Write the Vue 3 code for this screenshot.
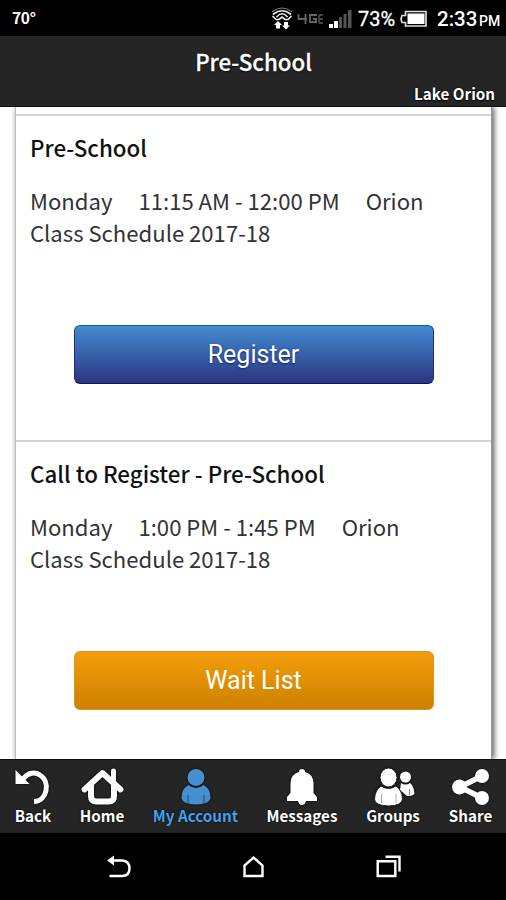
<script setup>
const classes = [
  { title: 'Pre-School', day: 'Monday', time: '11:15 AM - 12:00 PM', place: 'Orion', term: 'Class Schedule 2017-18', action: 'Register', kind: 'register' },
  { title: 'Call to Register - Pre-School', day: 'Monday', time: '1:00 PM - 1:45 PM', place: 'Orion', term: 'Class Schedule 2017-18', action: 'Wait List', kind: 'wait' },
]
const tabs = [
  { label: 'Back', icon: 'back' },
  { label: 'Home', icon: 'home' },
  { label: 'My Account', icon: 'user', active: true },
  { label: 'Messages', icon: 'bell' },
  { label: 'Groups', icon: 'groups' },
  { label: 'Share', icon: 'share' },
]
</script>

<template>
  <div class="screen">
    <div class="status">
      <span class="temp">70°</span>
      <div class="indicators">
        <svg class="wifi" width="22" height="24" viewBox="0 0 22 24">
          <g fill="none" stroke="#e8e8e8" stroke-width="1.7" stroke-linecap="round">
            <path d="M1.5 4.5Q11-2.5 20.5 4.5" stroke="#888" stroke-width="1.2" />
            <path d="M2.500 7Q11 .5 19.500 7M6 9.500Q11 4 16 9.500" />
            <path d="M2 9.500L5 12.500H8L11 10L14 12.500H17L20 9.500" />
          </g>
          <path d="M7 14L3 18H5V21.500H9V18H11ZM15 22.500L11 18.500H13V15H17V18.500H19Z" fill="#fff" />
        </svg>
        <svg class="lte" width="29" height="14" viewBox="0 0 29 14">
          <g fill="none" stroke="#666" stroke-width="1.8">
            <path d="M1.500 2V7H10M8.500 2V12M20 3H13V10H19V7H16" />
            <path d="M22 3V11M22 3H26M22 7H26M22 11H26" stroke="#444" />
          </g>
        </svg>
        <svg class="signal" width="25" height="20" viewBox="0 0 25 20">
          <path d="M1 15H5V19H1ZM6 12H10V19H6Z" fill="#fff" />
          <path d="M11 8H14V19H11ZM15.500 5H18.500V19H15.500ZM20 1H23.500V19H20Z" fill="#555" />
        </svg>
        <span class="percent">73%</span>
        <svg class="battery" width="28" height="18" viewBox="0 0 28 18">
          <path d="M5.500 1.500H26V16H5.500V12.500H2L1 9L2 5.500H5.500Z" fill="none" stroke="#ddd" stroke-width="1.700" />
          <path d="M7.500 3.500H24.500V14H7.500Z" fill="#fff" />
        </svg>
        <span class="clock">2:33</span><span class="meridiem">PM</span>
      </div>
    </div>

    <header class="header">
      <h1>Pre-School</h1>
      <span class="location">Lake Orion</span>
    </header>

    <main class="content">
      <div class="sheet">
        <section v-for="item in classes" :key="item.title" class="class-item">
          <h2>{{ item.title }}</h2>
          <div class="details">
            <div class="when"><span>{{ item.day }}</span><span>{{ item.time }}</span><span>{{ item.place }}</span></div>
            <div>{{ item.term }}</div>
          </div>
          <button :class="['action', item.kind]">{{ item.action }}</button>
        </section>
      </div>
    </main>

    <nav class="tabs">
      <div v-for="tab in tabs" :key="tab.label" class="tab" :class="{ active: tab.active }">
        <svg class="icon" width="44" height="40" viewBox="0 0 44 40">
          <g v-if="tab.icon === 'back'">
            <path d="M12 11C17 4.500 24 3.500 29 7C40 14 36 33 23 33.500" fill="none" stroke="#fff" stroke-width="5" />
            <path d="M4.500 2V16H18.500Z" fill="#fff" />
          </g>
          <g v-else-if="tab.icon === 'home'" fill="none" stroke="#fff" stroke-linecap="round" stroke-linejoin="round">
            <path d="M11 17V28Q11 33.500 16.500 33.500H28.500Q34 33.500 34 28V17" stroke-width="6" stroke-linecap="butt" />
            <path d="M4.500 21.500L22.500 5L40.500 21.500" stroke-width="5.800" />
            <path d="M33.500 3V14" stroke-width="5" />
          </g>
          <g v-else-if="tab.icon === 'user'" fill="#438fcf">
            <circle cx="22" cy="9.500" r="8.500" />
            <path d="M14.500 17Q22 23 29.500 17Q36 20 36.500 29Q37 36 22 36.500Q7 36 7.500 29Q8 20 14.500 17Z" />
            <path d="M14 27V35M30 27V35" stroke="#28547b" stroke-width="1.200" />
          </g>
          <g v-else-if="tab.icon === 'bell'" fill="#fff">
            <path d="M19 4Q19 1 22 1T25 4Q33 6 33.500 15V25L37 29V33H26Q25 37 22 37T18 33H7V29L10.500 25V15Q11 6 19 4Z" />
          </g>
          <g v-else-if="tab.icon === 'groups'" fill="#fff">
            <circle cx="34.500" cy="9" r="5.500" />
            <path d="M30 15Q34.500 18 39 15Q43 18 43.500 26Q41 28.500 36 28L29 22Z" />
            <path d="M38.500 21V27" stroke="#888" />
            <path d="M10 18Q17.500 23 25 18Q31 22 31.500 31Q31 37.500 17.500 38Q3.500 37.500 3.500 31Q4 22 10 18Z" stroke="#252525" />
            <ellipse cx="17.500" cy="9.500" rx="8.500" ry="9.500" stroke="#252525" />
            <path d="M10.500 26V35M25 26V35" stroke="#aaa" />
          </g>
          <g v-else>
            <path d="M33 8L11 19L33 30" fill="none" stroke="#fff" stroke-width="5.500" />
            <g fill="#fff"><circle cx="33" cy="8" r="7" /><circle cx="10.500" cy="19" r="7.500" /><circle cx="33" cy="30" r="7" /></g>
          </g>
        </svg>
        <span>{{ tab.label }}</span>
      </div>
    </nav>

    <div class="system-nav">
      <svg width="26" height="26" viewBox="0 0 26 26">
        <path d="M5 6.500H16Q23.500 7 23.500 14.500T16 22H3.500" fill="none" stroke="#fff" stroke-width="2.500" />
        <path d="M1 6.500L8 1.500V11.500Z" fill="#fff" />
      </svg>
      <svg width="26" height="26" viewBox="0 0 26 26">
        <path d="M3.500 22V11.500L12.500 3.500L21.500 11.500V22Z" fill="none" stroke="#fff" stroke-width="2.400" />
      </svg>
      <svg width="26" height="26" viewBox="0 0 26 26">
        <path d="M1.700 7.200H19.300V22H1.700ZM9.500 2.800H23.500V17.500" fill="none" stroke="#fff" stroke-width="2.400" />
      </svg>
    </div>
  </div>
</template>

<style>
body { margin: 0; background: #000; }
</style>

<style scoped>
* { box-sizing: border-box; }
.screen {
  width: 506px;
  height: 900px;
  display: flex;
  flex-direction: column;
  overflow: hidden;
  background: #000;
  font-family: "Noto Sans CJK SC", "Noto Sans", sans-serif;
  white-space: nowrap;
}
.status {
  height: 36px;
  flex: none;
  display: flex;
  align-items: center;
  justify-content: space-between;
  padding: 0 6px 0 12px;
  color: #fff;
}
.temp { font-size: 15.500px; font-weight: 700; letter-spacing: -0.3px; padding-bottom: 2px; }
.indicators { display: flex; align-items: center; font-family: Roboto, sans-serif; padding-top: 1px; }
.wifi { margin-right: 4px; }
.lte { margin-right: 2px; }
.signal { margin-right: 5px; }
.percent { width: 38px; font-size: 20px; -webkit-text-stroke: 0.3px #fff; }
.battery { margin: 0 9px 0 4px; }
.clock { width: 42px; font-size: 20.500px; font-weight: 500; }
.meridiem { width: 21px; font-size: 14px; font-weight: 500; padding-top: 4px; }
.header {
  height: 71px;
  flex: none;
  background: #252525;
  border-bottom: 1px solid #111;
  color: #fff;
  display: flex;
  flex-direction: column;
  align-items: center;
  padding: 9px 11px 0;
  text-shadow: 0 0 2px #000, 0 1px 1px #000;
}
h1 { margin: 0 0 0 1px; font-size: 22.300px; line-height: 32px; font-weight: 500; -webkit-text-stroke: 0.3px #fff; }
.location { align-self: flex-end; font-size: 15.200px; line-height: 24px; font-weight: 700; margin-top: 4px; }
.content { flex: none; height: 652px; background: #fff; padding: 0 14px 0 15px; overflow: hidden; }
.sheet {
  height: 652px;
  padding-top: 7px;
  border-left: 1px solid #bbb;
  border-right: 1px solid #999;
  box-shadow: 2px 0 6px #555;
  background: #fff;
  clip-path: inset(0 -14px 0 -3px);
}
.class-item {
  height: 326px;
  border-top: 2px solid #d3d3d3;
  padding: 15px 14px 0;
  display: flex;
  flex-direction: column;
  color: #111;
}
h2 { margin: 0 0 21px; font-size: 22.360px; line-height: 32px; font-weight: 500; }
.details { font-size: 22.100px; line-height: 32px; font-weight: 400; color: #333; margin-bottom: 77px; }
.when { display: flex; gap: 26px; }
.action {
  width: 360px;
  height: 59px;
  flex: none;
  align-self: center;
  border-radius: 6px;
  color: #fff;
  font: 400 25px Roboto, sans-serif;
  padding: 0;
  border: 1px solid;
}
.action.register {
  background: linear-gradient(#438bd2, #2b3580);
  border-color: #15569c #1c2f75 #11105f;
  text-shadow: 0 1px 2px #172769;
}
.action.wait { background: linear-gradient(#f29c0c, #ce8200); border-color: #dc9320; }
.tabs {
  height: 74px;
  flex: none;
  display: grid;
  grid-template-columns: 66px 72px 115px 98px 84px 71px;
  background: #252525;
  border-top: 1px solid #101010;
  color: #fff;
}
.tab {
  display: flex;
  flex-direction: column;
  align-items: center;
  padding-top: 8px;
  font-size: 15.200px;
  font-weight: 700;
  line-height: 20px;
  text-shadow: 0 0 2px #000;
}
.tab span { margin-top: -3px; }
.tab.active { color: #48a0e8; }
.icon { flex: none; overflow: visible; filter: drop-shadow(0 0 1px #000); }
.system-nav {
  flex: 1;
  display: flex;
  justify-content: center;
  gap: 109px;
  padding: 21px 0 0 1px;
  background: #000;
}
</style>
